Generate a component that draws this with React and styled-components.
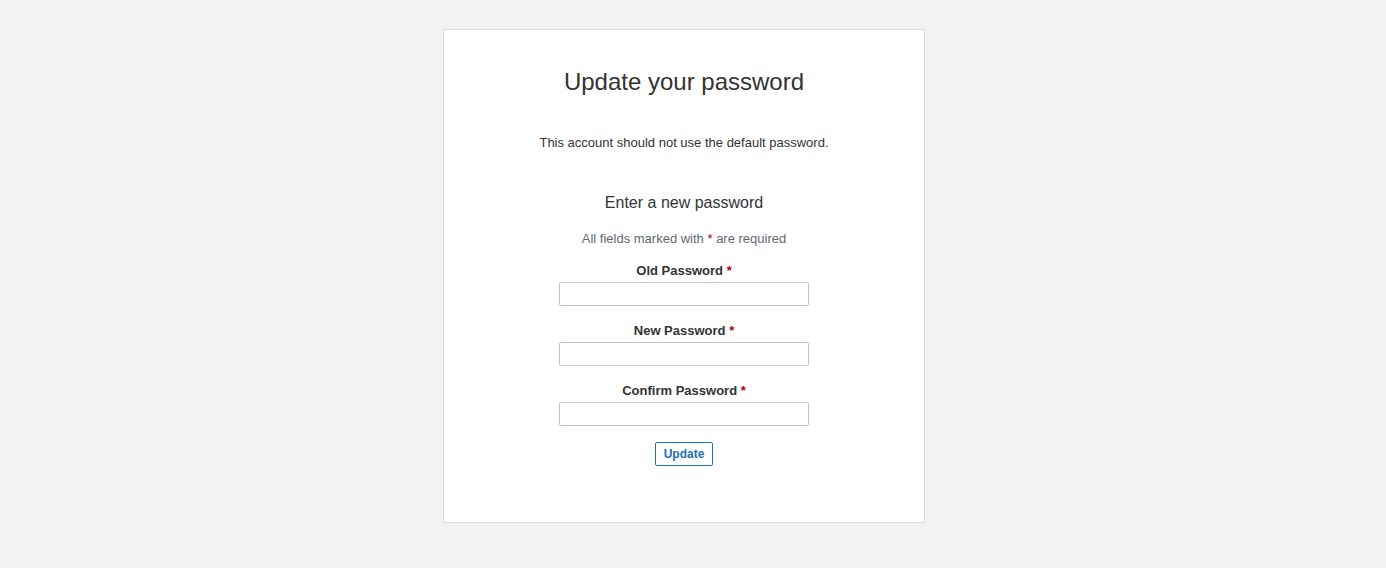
import React from 'react';
import styled, { createGlobalStyle } from 'styled-components';

const GlobalStyle = createGlobalStyle`
  html, body {
    margin: 0;
    padding: 0;
    background: #f2f2f2;
  }
  body {
    font-family: "Liberation Sans", Arial, sans-serif;
    color: #333;
  }
`;

const Page = styled.div`
  min-height: 568px;
  padding: 29px 18px 0 0;
  box-sizing: border-box;
`;

const Card = styled.div`
  width: 482px;
  box-sizing: border-box;
  margin: 0 auto;
  background: #fff;
  border: 1px solid #dcdcde;
  padding: 37px 0 56px;
  display: flex;
  flex-direction: column;
  align-items: center;
  text-align: center;
`;

const Title = styled.h1`
  margin: 0;
  font-size: 24px;
  font-weight: 400;
  line-height: 29px;
  color: #333;
`;

const Notice = styled.p`
  margin: 38px 0 0;
  font-size: 13px;
  line-height: 18px;
  color: #333;
`;

const Subtitle = styled.h2`
  margin: 41px 0 0;
  font-size: 16px;
  font-weight: 400;
  line-height: 20px;
  color: #333;
`;

const Hint = styled.p`
  margin: 17px 0 0;
  font-size: 13px;
  line-height: 18px;
  color: #646970;
`;

const Required = styled.span`
  color: #a00;
`;

const Form = styled.form`
  display: flex;
  flex-direction: column;
  align-items: center;
`;

const Field = styled.div`
  display: flex;
  flex-direction: column;
  align-items: center;
  margin-top: ${(p) => (p.$first ? 14 : 16)}px;
`;

const Label = styled.label`
  font-size: 13px;
  font-weight: 700;
  line-height: 18px;
  color: #333;
  margin-bottom: 2px;
`;

const Input = styled.input`
  width: 250px;
  height: 24px;
  box-sizing: border-box;
  border: 1px solid #c3c4c7;
  border-radius: 2px;
  background: #fff;
  padding: 0 6px;
  font-size: 13px;
  font-family: inherit;
  outline: none;
`;

const Button = styled.button`
  margin-top: 16px;
  height: 24px;
  box-sizing: border-box;
  padding: 0 8px;
  background: #fff;
  border: 1px solid #2271b1;
  border-radius: 2px;
  color: #2271b1;
  font-family: inherit;
  font-size: 12px;
  font-weight: 700;
  cursor: pointer;
`;

const fields = [
  { id: 'old', label: 'Old Password' },
  { id: 'new', label: 'New Password' },
  { id: 'confirm', label: 'Confirm Password' },
];

export default function App() {
  return (
    <>
      <GlobalStyle />
      <Page>
        <Card>
          <Title>Update your password</Title>
          <Notice>This account should not use the default password.</Notice>
          <Subtitle>Enter a new password</Subtitle>
          <Hint>
            All fields marked with <Required>*</Required> are required
          </Hint>
          <Form onSubmit={(e) => e.preventDefault()}>
            {fields.map((f, i) => (
              <Field key={f.id} $first={i === 0}>
                <Label htmlFor={f.id}>
                  {f.label} <Required>*</Required>
                </Label>
                <Input id={f.id} type="password" />
              </Field>
            ))}
            <Button type="submit">Update</Button>
          </Form>
        </Card>
      </Page>
    </>
  );
}
